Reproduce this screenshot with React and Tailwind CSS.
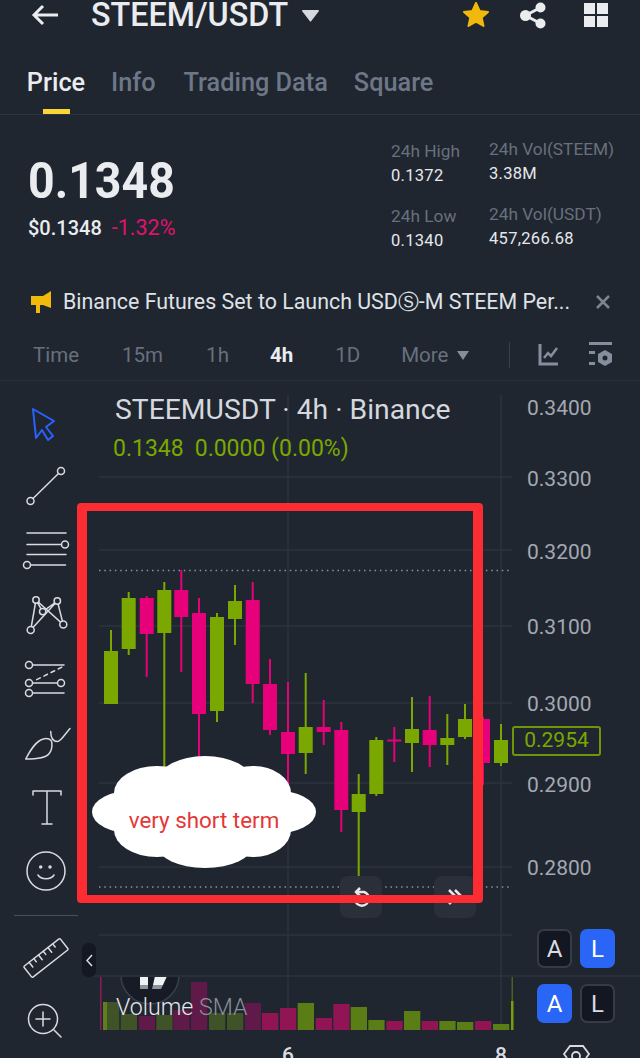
import React from "react";

const G = "#7ba800";
const P = "#e6007a";
const candles = [
  [111, 651, 704, 630, 704, G],
  [128.7, 598, 649, 592, 655, G],
  [146.7, 598, 634, 596, 677, P],
  [164.3, 590, 633, 582, 770, G],
  [181.3, 590, 617, 570, 672, P],
  [199, 613, 714, 598, 760, P],
  [217, 617, 711, 613, 722, G],
  [235, 601, 619, 585, 645, G],
  [252.7, 600, 684, 582, 703, P],
  [270, 684, 730, 659, 735, P],
  [288, 732, 754, 682, 785, P],
  [305.7, 727, 753, 673, 774, G],
  [323.7, 727, 732, 700, 745, P],
  [341.3, 730, 810, 722, 832, P],
  [358.7, 794, 812, 774, 876, G],
  [376.3, 740, 794, 737, 796, G],
  [394.3, 739.5, 741.5, 727, 762, P],
  [412, 729, 743, 697, 772, G],
  [429.7, 730, 745, 696, 767, P],
  [447.3, 738, 745, 714, 765, G],
  [465, 719, 737, 704, 739, G],
  [483, 719, 763, 717, 785, P],
  [501, 740, 763, 724, 766, G],
];
const DG = "#3f5228";
const DP = "#5f1a49";
const BG = "#5a7d16";
const BP = "#911455";
const vols = [
  [1002, DG], [1014, DG], [1016, DP], [1015, DG], [1010, DP], [982, DP], [1013, DG], [1013, DG], [1003, DP],
  [1013, BP], [1008, BP], [1003, BG], [1018, BP], [1004, BP], [1007, BG], [1020, BG], [1021, BP], [1011, BG],
  [1021, BP], [1021, BG], [1022, BG], [1021, BP], [1024, BG],
];
const axis = [
  ["0.3400", 415], ["0.3300", 486], ["0.3200", 559], ["0.3100", 634], ["0.3000", 711], ["0.2900", 792], ["0.2800", 875],
];

function ToolIcon({ children }) {
  return (
    <svg width="56" height="56" viewBox="0 0 56 56" fill="none" stroke="#d8dbe0" strokeWidth="1.5" strokeLinecap="round" strokeLinejoin="round" className="overflow-visible">
      {children}
    </svg>
  );
}

function Slot({ children, h = "h-[64px]" }) {
  return <div className={`${h} w-full flex items-center justify-center shrink-0`}>{children}</div>;
}

function Stat({ label, value }) {
  return (
    <div>
      <div className="text-[17.3px] leading-[24px] text-[#68707d] whitespace-nowrap">{label}</div>
      <div className="text-[16.5px] leading-[24px] mt-px text-[#e6e8eb] whitespace-nowrap tracking-[0.3px]">{value}</div>
    </div>
  );
}

function ABtn({ children, on }) {
  return (
    <div className={`w-[35px] h-[39px] rounded-[7px] flex items-center justify-center text-[24px] ${on ? "bg-[#2a66f6] text-white" : "bg-[#131722] border-2 border-[#363b47] text-[#d8dbe0]"}`}>
      {children}
    </div>
  );
}

export default function App() {
  return (
    <div className="w-[640px] h-[1058px] overflow-hidden flex flex-col bg-[#1f2630] font-['Roboto',sans-serif]">
      {/* header */}
      <div className="h-[30px] shrink-0 flex items-center relative pl-[31px] pr-[32px]">
        <svg width="27" height="22" viewBox="0 0 27 22" fill="none" stroke="#eaecef" strokeWidth="3">
          <path d="M27 11H3M12 2l-9 9 9 9" />
        </svg>
        <div className="ml-[33px] text-[32.3px] leading-[30px] font-medium text-[#eaecef] whitespace-nowrap">STEEM/USDT</div>
        <svg className="ml-[14px]" width="17" height="13" viewBox="0 0 17 13" fill="#d5d8dc"><path d="M1 1h15a1 1 0 0 1 .6 1.6L9.3 12a1 1 0 0 1-1.6 0L.4 2.6A1 1 0 0 1 1 1z" /></svg>
        <div className="flex-1" />
        <svg width="28" height="28" viewBox="0 0 28 28" fill="#f0b90b" stroke="#f0b90b" strokeWidth="2" strokeLinejoin="round"><path d="M14 2l3.6 8 8.4.9-6.3 5.700 1.800 8.400L14 20.700 6.500 25l1.800-8.400L2 10.900l8.400-.9z" /></svg>
        <svg className="ml-[30px]" width="26" height="27" viewBox="0 0 26 27" fill="#eaecef"><circle cx="5.500" cy="13.500" r="5.500" /><circle cx="20.500" cy="5.500" r="5" /><circle cx="20.500" cy="21.500" r="5" /><path d="M5.500 13.500L20.500 5.500M5.500 13.500l15 8" stroke="#eaecef" strokeWidth="3" /></svg>
        <div className="ml-[38px] grid grid-cols-2 gap-[2px] w-[24px] h-[24px]">
          <div className="bg-[#eaecef]" /><div className="bg-[#eaecef]" /><div className="bg-[#eaecef]" /><div className="bg-[#eaecef]" />
        </div>
      </div>

      {/* tabs */}
      <div className="mt-[38px] shrink-0 flex pl-[28px] border-b border-[#2e343e] text-[25.300px] leading-[30px] font-medium">
        <div className="flex flex-col items-center w-[56px]">
          <span className="text-[#eaecef] whitespace-nowrap">Price</span>
          <div className="w-[27px] h-[5px] mt-[11px] bg-[#fcd535]" />
        </div>
        <span className="text-[#6e7787] ml-[27px]">Info</span>
        <span className="text-[#6e7787] ml-[28px]">Trading Data</span>
        <span className="text-[#6e7787] ml-[26px]">Square</span>
      </div>

      {/* stats */}
      <div className="h-[172px] shrink-0 flex pl-[28px]">
        <div className="pt-[41px] w-[363px]">
          <div className="text-[50px] leading-[50px] font-bold text-[#eaecef] origin-left scale-x-[0.93]">0.1348</div>
          <div className="mt-[10px] flex gap-[10px] text-[20px] leading-[24px]">
            <span className="text-[#eaecef] font-medium">$0.1348</span>
            <span className="text-[#e0116f] text-[21.500px]">-1.32%</span>
          </div>
        </div>
        <div className="pt-[24px] w-[98px] flex flex-col gap-[16px]">
          <Stat label="24h High" value="0.1372" />
          <Stat label="24h Low" value="0.1340" />
        </div>
        <div className="pt-[22px] flex flex-col gap-[16px]">
          <Stat label="24h Vol(STEEM)" value="3.38M" />
          <Stat label="24h Vol(USDT)" value="457,266.68" />
        </div>
      </div>

      {/* notice */}
      <div className="h-[30px] shrink-0 flex items-center pl-[31px]">
        <svg width="21" height="22" viewBox="0 0 21 22" fill="#f0b90b"><path d="M0 5h12l8-5v17l-8-3H9v8H5v-8H0z" /></svg>
        <div className="ml-[11px] w-[512px] text-[21.400px] text-[#dfe2e6] whitespace-nowrap">Binance Futures Set to Launch USDⓈ-M STEEM Per...</div>
        <svg className="ml-[21px]" width="14" height="14" viewBox="0 0 14 14" stroke="#7d8592" strokeWidth="2.500"><path d="M1 1l12 12M13 1L1 13" /></svg>
      </div>

      {/* time frames */}
      <div className="mt-[13px] h-[50px] shrink-0 flex items-center relative text-[20.500px] text-[#68707d]">
        <span className="ml-[33px]">Time</span>
        <span className="ml-[43px]">15m</span>
        <span className="ml-[43px]">1h</span>
        <span className="ml-[41px] text-[#eaecef] font-bold">4h</span>
        <span className="ml-[42px]">1D</span>
        <span className="ml-[41px]">More</span>
        <svg className="ml-[9px]" width="12" height="9" viewBox="0 0 12 9" fill="#848e9c"><path d="M0 0h12L6 9z" /></svg>
        <div className="ml-[40px] w-px h-[26px] bg-[#3a404b]" />
        <svg className="ml-[28px]" width="20" height="22" viewBox="0 0 20 22" fill="none" stroke="#848e9c" strokeWidth="3"><path d="M2 0v20h18" /><path d="M6 14l4-5 3 3 6-8" strokeWidth="2.500" /></svg>
        <svg className="ml-[30px]" width="25" height="26" viewBox="0 0 25 26" fill="#848e9c"><path d="M1 0h23v3H1z" /><path d="M1 9h6v3H1zM1 20h6v3H1z" /><path fillRule="evenodd" d="M17 8l7 4v8l-7 4-7-4v-8zm0 5.500a2.500 2.500 0 1 0 0 5 2.500 2.500 0 0 0 0-5z" /></svg>
      </div>

      {/* chart section */}
      <div className="flex-1 min-h-0 flex border-t border-[#2b313b]">
        {/* drawing tools */}
        <div className="w-[92px] shrink-0 flex flex-col items-center pt-[11px]">
          <Slot>
            <ToolIcon><path d="M15 13l21 12-8 6 7 9-5 4-6-10-6 8z" stroke="#2962ff" strokeWidth="2" /></ToolIcon>
          </Slot>
          <Slot>
            <ToolIcon><circle cx="12.500" cy="41" r="3.500" /><circle cx="43" cy="11" r="3.500" /><path d="M15 38.500L40.500 13.500" /></ToolIcon>
          </Slot>
          <Slot>
            <ToolIcon><path d="M9 9h39M9 20.500h34.500M9 30.500h39M12.500 41h35" /><circle cx="47" cy="20.500" r="3.500" /><circle cx="9" cy="41" r="3.500" /></ToolIcon>
          </Slot>
          <Slot>
            <ToolIcon>
              <path d="M12.700 42L18 12l27.300 24.600L39.300 13 12.700 42M18 12l6.700 11.600M39.300 13L24.700 23.600" />
              <circle cx="18" cy="12" r="3.200" fill="#1f2630" /><circle cx="39.300" cy="13" r="3.200" fill="#1f2630" /><circle cx="24.700" cy="23.600" r="3.200" fill="#1f2630" /><circle cx="12.700" cy="42" r="3.500" fill="#1f2630" /><circle cx="45.300" cy="36.600" r="3.500" fill="#1f2630" />
            </ToolIcon>
          </Slot>
          <Slot>
            <ToolIcon>
              <path d="M15 13h31M15 31h24M15 41h31" />
              <path d="M18.700 27.600L45 14.600" strokeDasharray="4 4" />
              <circle cx="11" cy="13" r="3.500" /><circle cx="11" cy="31" r="3.500" /><circle cx="11" cy="41" r="3.500" /><circle cx="43" cy="31" r="3.500" />
            </ToolIcon>
          </Slot>
          <Slot>
            <ToolIcon>
              <path d="M7.700 43C13 33 18 25 25.300 23c4-1 8 0 8.500 3 .5 5-1 10-3 12-3 4-12 5-23 5z" />
              <path d="M32.700 15.500c0 6 2 10 7 10 3 0 7-7 12.300-13" />
            </ToolIcon>
          </Slot>
          <Slot>
            <ToolIcon><path d="M15 15v-4h28v4M29 11v33M24 44h10" /></ToolIcon>
          </Slot>
          <Slot>
            <ToolIcon>
              <circle cx="28" cy="27" r="19" />
              <circle cx="22.700" cy="23" r="1" fill="#d8dbe0" /><circle cx="32" cy="23" r="1" fill="#d8dbe0" />
              <path d="M20 31c3 5 13 5 16 0" />
            </ToolIcon>
          </Slot>
          <div className="mt-[11px] mb-[10px] w-[64px] h-px shrink-0 bg-[#4a505b]" />
          <Slot>
            <ToolIcon>
              <g transform="rotate(-38 28 28)">
                <rect x="5" y="21" width="46" height="14" rx="1" />
                <path d="M12 21v6M18 21v4M24 21v6M30 21v4M36 21v6M42 21v4" />
              </g>
            </ToolIcon>
          </Slot>
          <Slot h="h-[50px]">
            <ToolIcon>
              <circle cx="25" cy="32" r="14.500" />
              <path d="M18 32h14M25 25v14M36 43l7 7" />
            </ToolIcon>
          </Slot>
        </div>

        {/* chart pane; SVG coordinates equal page coordinates */}
        <div className="flex-1 relative">
          <svg className="absolute inset-0" width="548" height="677" viewBox="92 381 548 677">
            <g stroke="#2d333e" strokeWidth="1.500">
              {[477, 550, 626, 703, 783, 867, 935].map((y) => <line key={y} x1="99" x2="512" y1={y} y2={y} />)}
              <line x1="288" x2="288" y1="395" y2="1030" />
              <line x1="501" x2="501" y1="395" y2="1030" />
              <line x1="74" x2="640" y1="976" y2="976" />
            </g>
            <g stroke="#8d929a" strokeWidth="1.500" strokeDasharray="1.500 3.800">
              <line x1="99" x2="512" y1="570.500" y2="570.500" />
              <line x1="99" x2="512" y1="887" y2="887" />
            </g>
            {candles.map(([x, t, b, wt, wb, c], i) => (
              <g key={i} fill={c}>
                <rect x={x - 1} y={wt} width="2" height={wb - wt} />
                <rect x={x - 7} y={t} width="14" height={b - t} />
              </g>
            ))}
            <clipPath id="below"><rect x="92" y="977" width="200" height="60" /></clipPath>
            <circle cx="150" cy="975" r="29" fill="#171b26" stroke="#3a3f4a" strokeWidth="1.500" clipPath="url(#below)" />
            <g clipPath="url(#below)">
              <path d="M140 976h8v9h-8z" fill="#f0f1f3" />
              <path d="M140 985h8v4h-8z" fill="#8f939b" />
              <path d="M155 976h12l-4 9h-10z" fill="#f0f1f3" />
              <path d="M153 985h10l-2 4h-9z" fill="#8f939b" />
            </g>
            {vols.map(([y, c], i) => (
              <rect key={i} x={candles[i][0] - 8} y={y} width="16.300" height={1030 - y} fill={c} />
            ))}
            <rect x="103" y="1002" width="4" height="28" fill="#5f7f1c" />
            <rect x="100" y="977" width="1.500" height="53" fill="#8c1a5c" />
            <rect x="511.500" y="977" width="1.500" height="24" fill="#4a6120" />
            <rect x="511" y="1001" width="2.500" height="29" fill="#75a00c" />
            <g fontFamily="Roboto, sans-serif" fontSize="21" fill="#a3a9b2">
              {axis.map(([t, y]) => <text key={t} x="527" y={y}>{t}</text>)}
            </g>
            <g fontFamily="Roboto, sans-serif" fontSize="21" fontWeight="500" fill="#d8dbe0">
              <text x="282" y="1062">6</text>
              <text x="495" y="1062">8</text>
            </g>
            <path d="M567 1058l-3-4 6-8h13l6 8-3 4" fill="none" stroke="#d8dbe0" strokeWidth="1.800" />
            <circle cx="576" cy="1056" r="4" fill="none" stroke="#d8dbe0" strokeWidth="1.800" />
          </svg>

          <div className="absolute left-[23px] top-[13px] text-[28.300px] leading-[32px] text-[#d5d8de] whitespace-nowrap">STEEMUSDT · 4h · Binance</div>
          <div className="absolute left-[21px] top-[55px] flex gap-[11px] text-[23px] leading-[26px] text-[#7ba800] whitespace-nowrap">
            <span>0.1348</span><span>0.0000 (0.00%)</span>
          </div>

          {/* last price tag */}
          <div className="absolute left-[420px] top-[345px] w-[89px] h-[30px] border-2 border-[#6f9608] rounded-[3px] flex items-center justify-center bg-[#1f2630] text-[21px] text-[#7ba800]">0.2954</div>

          {/* scroll buttons under the annotation */}
          <div className="absolute left-[248px] top-[495px] w-[42px] h-[42px] rounded-[8px] bg-[#2b2f3a] flex items-center justify-center">
            <svg width="24" height="24" viewBox="0 0 24 24" fill="none" stroke="#e6e8eb" strokeWidth="2.500"><path d="M6 15a7 7 0 1 0 9-8H8" /><path d="M11 3L7 7l4 4" /></svg>
          </div>
          <div className="absolute left-[342px] top-[495px] w-[42px] h-[42px] rounded-[8px] bg-[#2b2f3a] flex items-center justify-center">
            <svg width="24" height="24" viewBox="0 0 24 24" fill="none" stroke="#e6e8eb" strokeWidth="2.500"><path d="M6 5l7 7-7 7M12 5l7 7-4 4" /></svg>
          </div>

          {/* cloud annotation */}
          <div className="absolute left-0 top-[375px] w-[224px] h-[112px]">
            <svg className="absolute inset-0" width="224" height="112" viewBox="92 756 224 112" fill="#ffffff">
              <ellipse cx="205" cy="781" rx="47" ry="25" />
              <ellipse cx="157" cy="793" rx="43" ry="27" />
              <ellipse cx="253" cy="793" rx="38" ry="27" />
              <ellipse cx="135" cy="812" rx="43" ry="22" />
              <ellipse cx="273" cy="812" rx="43" ry="22" />
              <ellipse cx="157" cy="830" rx="43" ry="27" />
              <ellipse cx="205" cy="845" rx="48" ry="23" />
              <ellipse cx="253" cy="830" rx="38" ry="27" />
              <ellipse cx="205" cy="812" rx="80" ry="40" />
            </svg>
            <div className="absolute inset-x-0 top-[50px] text-center text-[22.400px] leading-[28px] text-[#e53737]">very short term</div>
          </div>

          {/* red annotation frame */}
          <div className="absolute left-[-15px] top-[122px] w-[406px] h-[400px] border-x-[10px] border-y-[8px] border-[#fd2c33] rounded-[4px]" />

          {/* collapse handle */}
          <div className="absolute left-[-10px] top-[562px] w-[14px] h-[34px] rounded-[6px] bg-[#141822] flex items-center justify-center">
            <svg width="7" height="13" viewBox="0 0 7 13" fill="none" stroke="#d8dbe0" strokeWidth="1.500"><path d="M6 1L1 6.500 6 12" /></svg>
          </div>

          {/* scale buttons */}
          <div className="absolute left-[445px] top-[548px] flex gap-[8px]"><ABtn>A</ABtn><ABtn on>L</ABtn></div>
          <div className="absolute left-[445px] top-[603px] flex gap-[8px]"><ABtn on>A</ABtn><ABtn>L</ABtn></div>

          {/* volume legend */}
          <div className="absolute left-[24px] top-[612px] text-[23.200px] leading-[28px] font-light whitespace-nowrap">
            <span className="text-[#e6e8eb]">Volume</span> <span className="text-[#8b8f98]">SMA</span>
          </div>
        </div>
      </div>
    </div>
  );
}
